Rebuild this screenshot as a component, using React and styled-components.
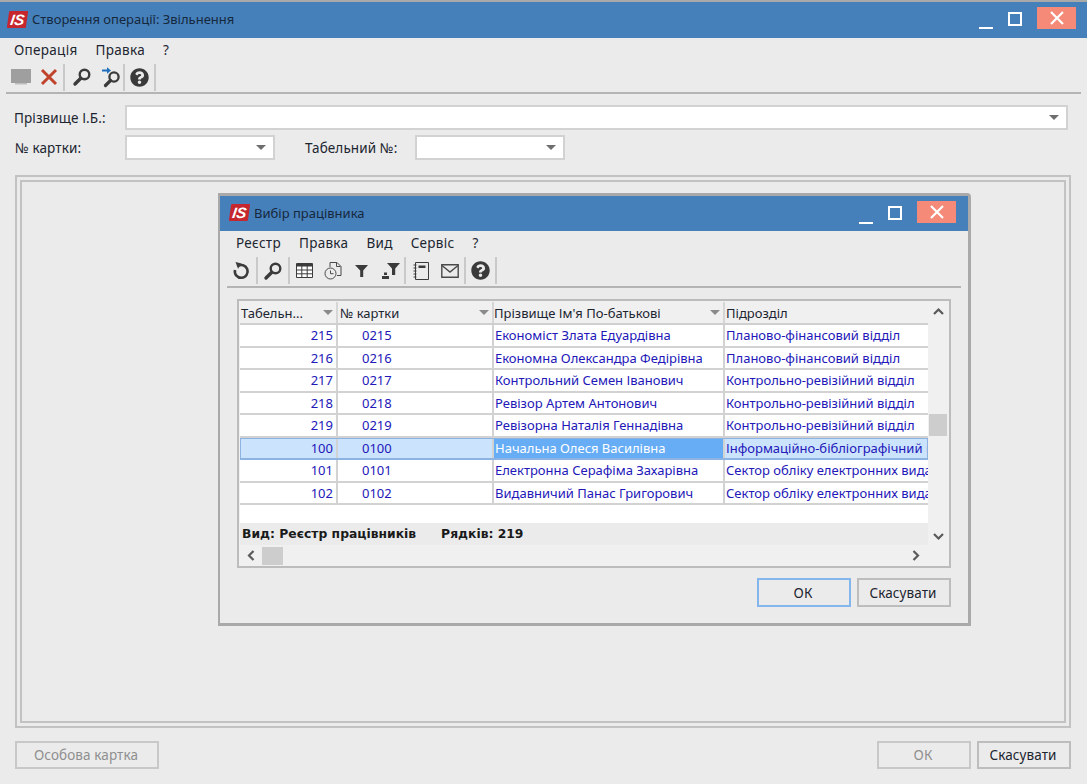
import React from 'react';
import styled, { createGlobalStyle } from 'styled-components';
import { FaQuestionCircle } from 'react-icons/fa';

const GlobalStyle = createGlobalStyle`
  html, body { margin: 0; padding: 0; background: #ebebeb; }
  * { box-sizing: border-box; }
  body { font-family: "Noto Sans", "Liberation Sans", sans-serif; font-size: 13.5px; color: #1c2530; }
`;

const Page = styled.div`
  position: relative;
  width: 1087px;
  height: 784px;
  overflow: hidden;
  background: #ebebeb;
  border-top: 2px solid #a9a9a9;
  display: flex;
  flex-direction: column;
`;

const TitleBar = styled.div`
  height: ${(p) => (p.$small ? '35px' : '36px')};
  flex: none;
  background: #4580bb;
  display: flex;
  align-items: center;
  padding-left: ${(p) => (p.$small ? '10px' : '8px')};
`;

const Logo = styled.div`
  width: 19px;
  height: 17px;
  margin-top: -2px;
  background: #c6262e;
  transform: skewX(-8deg);
  border-radius: 1px;
  color: #fff;
  font: italic bold 15px/17px "Liberation Sans", sans-serif;
  text-align: center;
  flex: none;
`;

const TitleText = styled.span`
  margin: -2px 0 0 5px;
  color: #16283c;
  font-size: 13px;
  flex: 1;
`;

const WinBtns = styled.div`
  display: flex;
  align-items: center;
  height: 100%;
  padding-top: ${(p) => (p.$small ? '2px' : '0')};
  padding-right: ${(p) => (p.$small ? '12px' : '11px')};
`;

const MinBtn = styled.div`
  width: 14px;
  height: 2px;
  background: #fff;
  margin-top: 16px;
`;

const MaxBtn = styled.div`
  width: 14px;
  height: 14px;
  border: 2px solid #fff;
  margin: -3px 15px 0;
`;

const CloseBtn = styled.div`
  width: 39px;
  height: 22px;
  margin-top: -5px;
  background: #f58a78;
  display: flex;
  align-items: center;
  justify-content: center;
`;

const MenuBar = styled.div`
  height: 24px;
  flex: none;
  display: flex;
  align-items: center;
  letter-spacing: 0.3px;
  padding-left: ${(p) => (p.$small ? '16px' : '14px')};
  gap: 18px;
`;

const Toolbar = styled.div`
  height: ${(p) => (p.$small ? '33px' : '32px')};
  flex: none;
  margin: ${(p) => (p.$small ? '0 7px' : '0 6px')};
  padding-left: ${(p) => (p.$small ? '2px' : '1px')};
  border-bottom: 2px solid #b4b4b4;
  display: flex;
  align-items: center;
`;

const ToolIcon = styled.div`
  width: ${(p) => p.$w || 28}px;
  height: 24px;
  padding-right: ${(p) => p.$pr || 0}px;
  display: flex;
  align-items: center;
  justify-content: center;
  color: #3b3b3b;
`;

const ToolSep = styled.div`
  width: 2px;
  height: 27px;
  background: #c9c9c9;
`;

const Form = styled.div`
  padding: 11px 19px 0 14px;
  display: flex;
  flex-direction: column;
  gap: 5px;
`;

const FormRow = styled.div`
  display: flex;
  align-items: center;
  height: 25px;
`;

const FieldLabel = styled.span`
  width: ${(p) => p.$w}px;
  flex: none;
  letter-spacing: 0.1px;
  padding-left: ${(p) => p.$indent || 0}px;
`;

const Combo = styled.div`
  width: ${(p) => (p.$w ? `${p.$w}px` : 'auto')};
  flex: ${(p) => (p.$w ? 'none' : '1')};
  height: 25px;
  background: #fff;
  border: 2px solid #d2d2d2;
  display: flex;
  align-items: center;
  justify-content: flex-end;
  padding-right: 7px;
`;

const Arrow = styled.div`
  width: 0;
  height: 0;
  border-left: 5px solid transparent;
  border-right: 5px solid transparent;
  border-top: 5px solid ${(p) => p.$color || '#6e6e6e'};
`;

const GroupOuter = styled.div`
  flex: 1;
  margin: 15px 16px 0 15px;
  border: 2px solid #c2c2c2;
  padding: 3px;
  display: flex;
`;

const GroupInner = styled.div`
  flex: 1;
  border: 2px solid #c2c2c2;
`;

const Footer = styled.div`
  height: 56px;
  flex: none;
  padding: 13px 16px 0 15px;
  display: flex;
  gap: 6px;
`;

const Spacer = styled.div`
  flex: 1;
`;

const Button = styled.div`
  width: ${(p) => p.$w || 94}px;
  height: ${(p) => p.$h || 28}px;
  border: 2px solid ${(p) => (p.$focus ? '#82b6ec' : p.$off ? '#c8c8c8' : '#bdbdbd')};
  color: ${(p) => (p.$off ? '#8f8f8f' : '#1c2530')};
  background: #ebebeb;
  letter-spacing: 0.1px;
  padding-right: 2px;
  display: flex;
  align-items: center;
  justify-content: center;
`;

const Dialog = styled.div`
  position: absolute;
  left: 218px;
  top: 191px;
  width: 753px;
  height: 433px;
  background: #ebebeb;
  border-style: solid;
  border-width: 3px 3px 3px 2px;
  border-color: #a9a9a9;
  border-top-right-radius: 4px;
  display: flex;
  flex-direction: column;
`;

const GridFrame = styled.div`
  margin: 11px 17px 0 17px;
  height: 269px;
  flex: none;
  border: 2px solid #bcbcbc;
  background: #f0f0f0;
  padding: 1px 1px 0 1px;
  display: flex;
  flex-direction: column;
  font-size: 13px;
`;

const GridMain = styled.div`
  flex: 1;
  display: flex;
  min-height: 0;
`;

const Table = styled.div`
  width: 688px;
  flex: none;
  background: #fff;
  display: flex;
  flex-direction: column;
  overflow: hidden;
`;

const columns = '98px 156px 231px 203px';

const HeaderRow = styled.div`
  display: grid;
  grid-template-columns: ${columns};
  height: 23px;
  flex: none;
  background: #f0f0f0;
  border-bottom: 2px solid #cfcfcf;
`;

const HeaderCell = styled.div`
  display: flex;
  align-items: center;
  justify-content: space-between;
  padding: 0 3px 0 ${(p) => p.$pad ?? 1}px;
  border-right: 2px solid #d6d6d6;
  white-space: nowrap;
  &:last-child { border-right: none; }
`;

const Row = styled.div`
  display: grid;
  grid-template-columns: ${columns};
  height: 22.5px;
  flex: none;
  position: relative;
  color: #2217b8;
  background: ${(p) => (p.$selected ? '#cce3fd' : '#fff')};
  border-bottom: 2px solid ${(p) => (p.$selected ? '#8db3e2' : '#d2d2d2')};
  ${(p) => p.$selected && 'outline: 1px solid #8db3e2; outline-offset: -1px;'}
`;

const Cell = styled.div`
  display: flex;
  align-items: center;
  white-space: nowrap;
  overflow: hidden;
  padding: ${(p) => (p.$right ? '0 3px 0 0' : `0 0 0 ${p.$indent || 1}px`)};
  justify-content: ${(p) => (p.$right ? 'flex-end' : 'flex-start')};
  border-right: 2px solid #d2d2d2;
  background: ${(p) => (p.$active ? '#66adf5' : 'transparent')};
  color: ${(p) => (p.$active ? '#fff' : 'inherit')};
  &:last-child { border-right: none; }
`;

const BlankArea = styled.div`
  flex: 1;
`;

const StatusBar = styled.div`
  height: 22px;
  flex: none;
  background: #ebebeb;
  font-family: "DejaVu Sans", sans-serif;
  font-weight: bold;
  font-size: 12.35px;
  display: flex;
  align-items: center;
  gap: 25px;
  padding-left: 2px;
  color: #1a1a1a;
`;

const VScroll = styled.div`
  flex: 1;
  position: relative;
  display: flex;
  flex-direction: column;
  align-items: center;
  justify-content: space-between;
  padding: 5px 0 3px;
`;

const VThumb = styled.div`
  position: absolute;
  left: 1px;
  top: 112px;
  width: 18px;
  height: 22px;
  background: #cdcdcd;
`;

const HScroll = styled.div`
  height: 21px;
  flex: none;
  display: flex;
  align-items: center;
  padding: 0 27px 0 6px;
`;

const HThumb = styled.div`
  width: 21px;
  height: 18px;
  margin-left: 5px;
  background: #cdcdcd;
`;

const DialogFooter = styled.div`
  display: flex;
  justify-content: flex-end;
  gap: 6px;
  padding: 10px 17px 0 0;
`;

const rows = [
  ['215', '0215', 'Економіст Злата Едуардівна', 'Планово-фінансовий відділ'],
  ['216', '0216', 'Економна Олександра Федірівна', 'Планово-фінансовий відділ'],
  ['217', '0217', 'Контрольний Семен Іванович', 'Контрольно-ревізійний відділ'],
  ['218', '0218', 'Ревізор Артем Антонович', 'Контрольно-ревізійний відділ'],
  ['219', '0219', 'Ревізорна Наталія Геннадівна', 'Контрольно-ревізійний відділ'],
  ['100', '0100', 'Начальна Олеся Василівна', 'Інформаційно-бібліографічний відділ'],
  ['101', '0101', 'Електронна Серафіма Захарівна', 'Сектор обліку електронних видань'],
  ['102', '0102', 'Видавничий Панас Григорович', 'Сектор обліку електронних видань'],
];

const CloseGlyph = () => (
  <svg width="14" height="14" viewBox="0 0 14 14">
    <path d="M1 1 13 13M13 1 1 13" stroke="#fff" strokeWidth="2.2" />
  </svg>
);

const Chevron = ({ dir }) => {
  const d = {
    up: 'M1 7 5.5 2.5 10 7',
    down: 'M1 3 5.5 7.5 10 3',
    left: 'M7.5 1 3 5.5 7.5 10',
    right: 'M3.5 1 8 5.5 3.5 10',
  }[dir];
  return (
    <svg width="11" height="11" viewBox="0 0 11 11">
      <path d={d} fill="none" stroke="#5a5a5a" strokeWidth="2.2" />
    </svg>
  );
};

const SaveIcon = () => (
  <svg width="22" height="18" viewBox="0 0 22 18">
    <path d="M1 1h20v14H1z" fill="#9f9f9f" />
    <path d="M5 15h12v1.5H5z" fill="#bdbdbd" />
  </svg>
);

const DeleteIcon = () => (
  <svg width="18" height="18" viewBox="0 0 18 18">
    <path d="M2 2 16 16M16 2 2 16" stroke="#c0442c" strokeWidth="3" />
  </svg>
);

const SearchIcon = () => (
  <svg width="20" height="20" viewBox="0 0 20 20">
    <circle cx="12.5" cy="7.5" r="4.8" fill="none" stroke="#3b3b3b" strokeWidth="2.4" />
    <path d="M8.8 11.2 3 17" stroke="#3b3b3b" strokeWidth="3.4" strokeLinecap="round" />
  </svg>
);

const SearchNextIcon = () => (
  <svg width="22" height="22" viewBox="0 0 22 22">
    <circle cx="14" cy="11" r="4.6" fill="none" stroke="#3b3b3b" strokeWidth="2.3" />
    <path d="M10.5 14.5 5.5 19.5" stroke="#3b3b3b" strokeWidth="3.2" strokeLinecap="round" />
    <path d="M2 4.5h7" stroke="#1f6fbd" strokeWidth="2" />
    <path d="M7 1.2 11 4.5 7 7.8z" fill="#1f6fbd" />
  </svg>
);

const HelpIcon = () => <FaQuestionCircle size={19} color="#3a3a3a" />;

const RefreshIcon = () => (
  <svg width="18" height="20" viewBox="0 0 18 20">
    <path d="M5.5 5.2A6.4 6.4 0 1 1 3 9" fill="none" stroke="#3b3b3b" strokeWidth="2.6" />
    <path d="M3.5 1 9.5 2.5 6 7.8z" fill="#3b3b3b" />
  </svg>
);

const TableIcon = () => (
  <svg width="17" height="15" viewBox="0 0 17 15">
    <path d="M.5.5h16v14H.5z" fill="#fff" stroke="#3b3b3b" />
    <path d="M.5 1h16v2.5H.5z" fill="#3b3b3b" />
    <path d="M.5 7h16M.5 10.8h16M5.8 1v13.5M11.2 1v13.5" stroke="#3b3b3b" />
  </svg>
);

const HistoryIcon = () => (
  <svg width="19" height="19" viewBox="0 0 19 19">
    <path d="M6 6V1.5h7l4 4v9h-4" fill="none" stroke="#4a4a4a" />
    <path d="M12.5 1.5v4h4" fill="none" stroke="#4a4a4a" />
    <circle cx="6.5" cy="12.5" r="5.5" fill="#ebebeb" stroke="#4a4a4a" />
    <path d="M6.5 9.5v3.2h3" fill="none" stroke="#4a4a4a" />
  </svg>
);

const FilterIcon = () => (
  <svg width="14" height="14" viewBox="0 0 14 14">
    <path d="M0 1h13L8.2 6.5V13H5.2V6.5z" fill="#3b3b3b" />
  </svg>
);

const FilterUserIcon = () => (
  <svg width="18" height="17" viewBox="0 0 18 17">
    <path d="M5 1h13l-4.8 5.5V13h-3.2V6.5z" fill="#3b3b3b" />
    <path d="M2 10.5h3v2.5H2zM0 14h7v3H0z" fill="#3b3b3b" />
  </svg>
);

const NotebookIcon = () => (
  <svg width="16" height="18" viewBox="0 0 16 18">
    <path d="M2.5.5h13v17h-13z" fill="none" stroke="#3b3b3b" />
    <path d="M5.5 3.5h7v2.5h-7z" fill="#3b3b3b" />
    <path d="M.5 3h3M.5 6h3M.5 9h3M.5 12h3M.5 15h3" stroke="#3b3b3b" />
  </svg>
);

const MailIcon = () => (
  <svg width="18" height="14" viewBox="0 0 18 14">
    <path d="M.8.8h16.4v12.4H.8z" fill="none" stroke="#4a4a4a" strokeWidth="1.4" />
    <path d="M1 1.5 9 8l8-6.5" fill="none" stroke="#4a4a4a" strokeWidth="1.4" />
  </svg>
);

const App = () => (
  <>
    <GlobalStyle />
    <Page>
      <TitleBar>
        <Logo>IS</Logo>
        <TitleText>Створення операції: Звільнення</TitleText>
        <WinBtns>
          <MinBtn />
          <MaxBtn />
          <CloseBtn><CloseGlyph /></CloseBtn>
        </WinBtns>
      </TitleBar>
      <MenuBar>
        <span>Операція</span>
        <span>Правка</span>
        <span>?</span>
      </MenuBar>
      <Toolbar>
        <ToolIcon><SaveIcon /></ToolIcon>
        <ToolIcon><DeleteIcon /></ToolIcon>
        <ToolSep />
        <ToolIcon $w={33}><SearchIcon /></ToolIcon>
        <ToolIcon $w={25}><SearchNextIcon /></ToolIcon>
        <ToolSep />
        <ToolIcon $w={29}><HelpIcon /></ToolIcon>
        <ToolSep />
      </Toolbar>
      <Form>
        <FormRow>
          <FieldLabel $w={111}>Прізвище І.Б.:</FieldLabel>
          <Combo><Arrow /></Combo>
        </FormRow>
        <FormRow>
          <FieldLabel $w={111} $indent={1}>№ картки:</FieldLabel>
          <Combo $w={150}><Arrow /></Combo>
          <FieldLabel $w={140} $indent={30}>Табельний №:</FieldLabel>
          <Combo $w={150}><Arrow /></Combo>
        </FormRow>
      </Form>
      <GroupOuter>
        <GroupInner />
      </GroupOuter>
      <Footer>
        <Button $w={144} $off>Особова картка</Button>
        <Spacer />
        <Button $off>ОК</Button>
        <Button>Скасувати</Button>
      </Footer>

      <Dialog>
        <TitleBar $small>
          <Logo>IS</Logo>
          <TitleText>Вибір працівника</TitleText>
          <WinBtns $small>
            <MinBtn />
            <MaxBtn />
            <CloseBtn><CloseGlyph /></CloseBtn>
          </WinBtns>
        </TitleBar>
        <MenuBar $small>
          <span>Реєстр</span>
          <span>Правка</span>
          <span>Вид</span>
          <span>Сервіс</span>
          <span>?</span>
        </MenuBar>
        <Toolbar $small>
          <ToolIcon $w={27} $pr={3}><RefreshIcon /></ToolIcon>
          <ToolSep />
          <ToolIcon $w={30}><SearchIcon /></ToolIcon>
          <ToolSep />
          <ToolIcon $w={29}><TableIcon /></ToolIcon>
          <ToolIcon><HistoryIcon /></ToolIcon>
          <ToolIcon $w={30}><FilterIcon /></ToolIcon>
          <ToolIcon $w={27}><FilterUserIcon /></ToolIcon>
          <ToolSep />
          <ToolIcon $w={30}><NotebookIcon /></ToolIcon>
          <ToolIcon $w={28}><MailIcon /></ToolIcon>
          <ToolSep />
          <ToolIcon $w={29}><HelpIcon /></ToolIcon>
          <ToolSep />
        </Toolbar>
        <GridFrame>
          <GridMain>
            <Table>
              <HeaderRow>
                <HeaderCell>Табельн...<Arrow $color="#8a8a8a" /></HeaderCell>
                <HeaderCell $pad={2}>№ картки<Arrow $color="#8a8a8a" /></HeaderCell>
                <HeaderCell $pad={0}>Прізвище Ім'я По-батькові<Arrow $color="#8a8a8a" /></HeaderCell>
                <HeaderCell>Підрозділ</HeaderCell>
              </HeaderRow>
              {rows.map((r) => {
                const selected = r[0] === '100';
                return (
                  <Row key={r[0]} $selected={selected}>
                    <Cell $right>{r[0]}</Cell>
                    <Cell $indent={24}>{r[1]}</Cell>
                    <Cell $active={selected}>{r[2]}</Cell>
                    <Cell>{r[3]}</Cell>
                  </Row>
                );
              })}
              <BlankArea />
              <StatusBar>
                <span>Вид: Реєстр працівників</span>
                <span>Рядків: 219</span>
              </StatusBar>
            </Table>
            <VScroll>
              <Chevron dir="up" />
              <VThumb />
              <Chevron dir="down" />
            </VScroll>
          </GridMain>
          <HScroll>
            <Chevron dir="left" />
            <HThumb />
            <Spacer />
            <Chevron dir="right" />
          </HScroll>
        </GridFrame>
        <DialogFooter>
          <Button $focus $h={29}>ОК</Button>
          <Button $h={29}>Скасувати</Button>
        </DialogFooter>
      </Dialog>
    </Page>
  </>
);

export default App;
